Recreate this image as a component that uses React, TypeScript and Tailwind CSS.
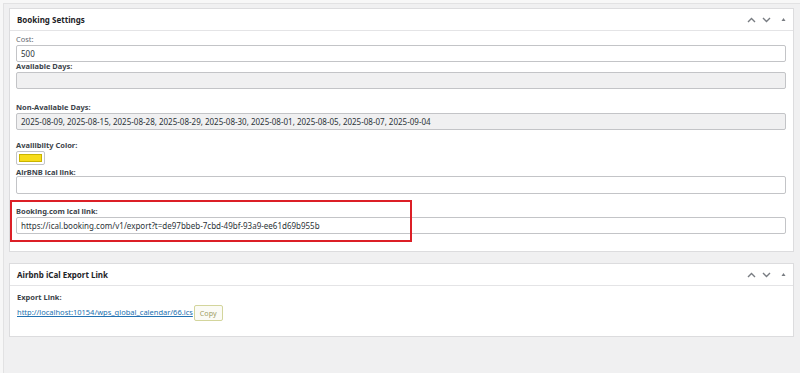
import type { ReactNode } from 'react';

const font = { fontFamily: '"Noto Sans", "Open Sans", sans-serif' };

function HeaderIcons() {
  return (
    <div className="flex items-center gap-[6px] pr-[6px] text-[#787c82]">
      <svg width="9" height="6" viewBox="0 0 9 6" fill="none" stroke="currentColor" strokeWidth="1.4">
        <path d="M1 5 L4.5 1.5 L8 5" />
      </svg>
      <svg width="9" height="6" viewBox="0 0 9 6" fill="none" stroke="currentColor" strokeWidth="1.4">
        <path d="M1 1 L4.5 4.5 L8 1" />
      </svg>
      <svg width="7" height="5" viewBox="0 0 7 5" className="ml-[3px]">
        <path d="M1.5 4 L3.5 1 L5.5 4 Z" fill="currentColor" />
      </svg>
    </div>
  );
}

function Panel({ title, children, className = '' }: { title: string; children: ReactNode; className?: string }) {
  return (
    <div className={`relative border border-[#dcdcde] bg-white ${className}`}>
      <div className="flex h-[22px] items-center justify-between border-b border-[#e4e4e6] pl-[7px]">
        <h2 className="text-[8px] font-bold text-[#1d2327]">{title}</h2>
        <HeaderIcons />
      </div>
      {children}
    </div>
  );
}

function Label({ children, light = false, className = '' }: { children: ReactNode; light?: boolean; className?: string }) {
  return (
    <div className={`h-[8px] text-[7.5px] leading-[8px] ${light ? 'text-[#646970]' : 'font-bold text-[#3c434a]'} ${className}`}>
      {children}
    </div>
  );
}

function Field({ value = '', disabled = false, className = '' }: { value?: string; disabled?: boolean; className?: string }) {
  return (
    <div
      className={`flex h-[17px] items-center rounded-[2px] border border-[#c3c4c7] px-[4px] text-[8px] text-[#2c3338] ${
        disabled ? 'bg-[#f0f0f1]' : 'bg-white'
      } ${className}`}
    >
      {value}
    </div>
  );
}

export default function App() {
  const nonAvailable =
    '2025-08-09, 2025-08-15, 2025-08-28, 2025-08-29, 2025-08-30, 2025-08-01, 2025-08-05, 2025-08-07, 2025-09-04';

  return (
    <div className="h-[373px] w-[800px] overflow-hidden bg-[#f7f7f7] pl-[3px] pt-[3px]" style={font}>
      <div className="h-full border-l border-t border-[#e2e2e3] bg-[#f0f0f1] pl-[5px] pr-[6px] pt-[4px]">
        <Panel title="Booking Settings">
          <div className="relative pb-[17px] pl-[6px] pr-[7px] pt-[4px]">
            <Label light className="mb-[2px]">Cost:</Label>
            <Field value="500" />

            <Label className="mb-[2px]">Available Days:</Label>
            <Field disabled />

            <Label className="mb-[2px] mt-[14px]">Non-Available Days:</Label>
            <Field disabled value={nonAvailable} />

            <Label className="mb-[2px] mt-[11px]">Availibilty Color:</Label>
            <div className="flex h-[14px] w-[29px] items-center justify-center rounded-[2px] border border-[#c3c4c7] bg-white">
              <div className="h-[8px] w-[23px] border border-[#c9b400] bg-[#f7dc1b]" />
            </div>

            <Label className="mt-[3px]">AirBNB ical link:</Label>
            <Field className="h-[18px]" />

            <Label className="mb-[2px] mt-[13px]">Booking.com ical link:</Label>
            <Field value="https://ical.booking.com/v1/export?t=de97bbeb-7cbd-49bf-93a9-ee61d69b955b" />

            <div className="pointer-events-none absolute left-0 top-[169px] h-[42px] w-[402px] border-[2.5px] border-[#dc1f26]" />
          </div>
        </Panel>

        <Panel title="Airbnb iCal Export Link" className="mt-[11px]">
          <div className="pb-[15px] pl-[7px] pt-[7px]">
            <Label className="mb-[4px]">Export Link:</Label>
            <div className="flex items-center gap-[1px]">
              <a href="#" className="text-[7.5px] text-[#2271b1] underline">
                http://localhost:10154/wps_global_calendar/66.ics
              </a>
              <button className="h-[16px] rounded-[2px] border border-[#d3d59c] bg-[#fbfbf5] px-[5px] text-[7.2px] text-[#9ea063]">
                Copy
              </button>
            </div>
          </div>
        </Panel>
      </div>
    </div>
  );
}
